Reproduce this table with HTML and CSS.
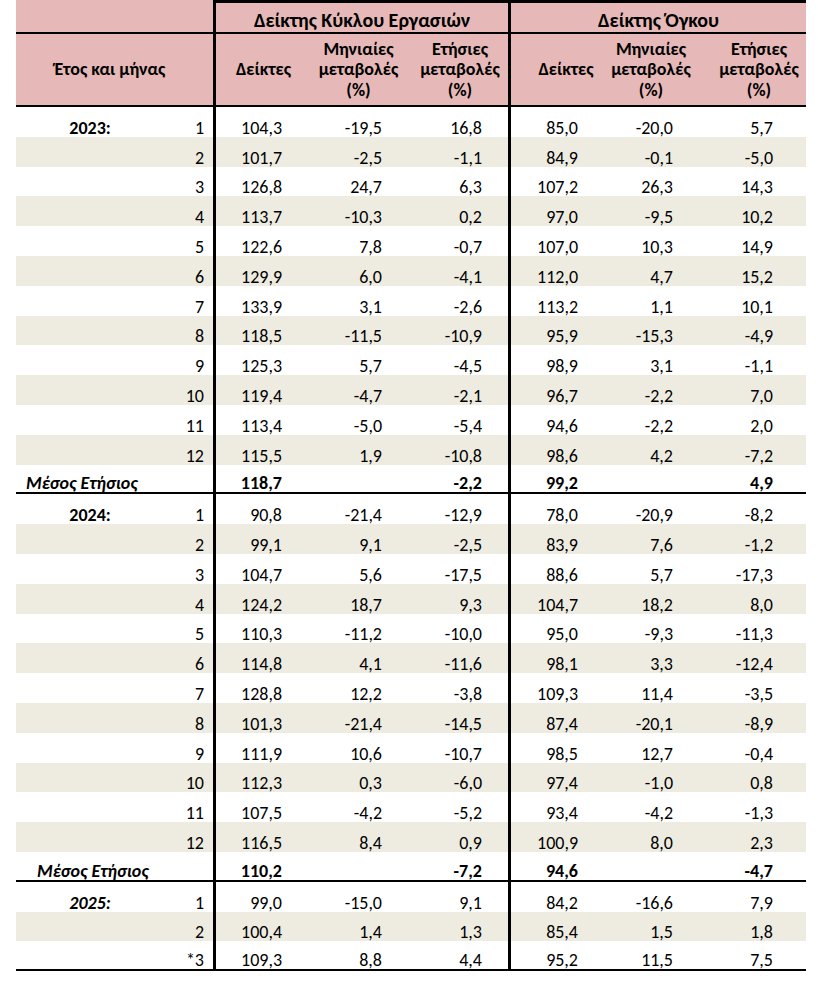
FILE: index.html
```html
<!DOCTYPE html>
<html lang="el">
<head>
<meta charset="utf-8">
<title>Δείκτες Κύκλου Εργασιών και Όγκου</title>
<link rel="stylesheet" href="styles.css">
</head>
<body>
<div class="sheet">
  <div class="row head1">
    <div class="cell corner"></div>
    <div class="cell group">Δείκτης Κύκλου Εργασιών</div>
    <div class="cell group">Δείκτης Όγκου</div>
  </div>
  <div class="row head2">
    <div class="cell hlabel">Έτος και μήνας</div>
    <div class="cell h c1">Δείκτες</div>
    <div class="cell h c2">Μηνιαίες<br>μεταβολές<br>(%)</div>
    <div class="cell h c3">Ετήσιες<br>μεταβολές<br>(%)</div>
    <div class="cell h c4">Δείκτες</div>
    <div class="cell h c5">Μηνιαίες<br>μεταβολές<br>(%)</div>
    <div class="cell h c6">Ετήσιες<br>μεταβολές<br>(%)</div>
  </div>

  <div class="row"><div class="cell year">2023:</div><div class="cell m">1</div><div class="cell n c1">104,3</div><div class="cell n c2">-19,5</div><div class="cell n c3">16,8</div><div class="cell n c4">85,0</div><div class="cell n c5">-20,0</div><div class="cell n c6">5,7</div></div>
  <div class="row alt"><div class="cell year"></div><div class="cell m">2</div><div class="cell n c1">101,7</div><div class="cell n c2">-2,5</div><div class="cell n c3">-1,1</div><div class="cell n c4">84,9</div><div class="cell n c5">-0,1</div><div class="cell n c6">-5,0</div></div>
  <div class="row"><div class="cell year"></div><div class="cell m">3</div><div class="cell n c1">126,8</div><div class="cell n c2">24,7</div><div class="cell n c3">6,3</div><div class="cell n c4">107,2</div><div class="cell n c5">26,3</div><div class="cell n c6">14,3</div></div>
  <div class="row alt"><div class="cell year"></div><div class="cell m">4</div><div class="cell n c1">113,7</div><div class="cell n c2">-10,3</div><div class="cell n c3">0,2</div><div class="cell n c4">97,0</div><div class="cell n c5">-9,5</div><div class="cell n c6">10,2</div></div>
  <div class="row"><div class="cell year"></div><div class="cell m">5</div><div class="cell n c1">122,6</div><div class="cell n c2">7,8</div><div class="cell n c3">-0,7</div><div class="cell n c4">107,0</div><div class="cell n c5">10,3</div><div class="cell n c6">14,9</div></div>
  <div class="row alt"><div class="cell year"></div><div class="cell m">6</div><div class="cell n c1">129,9</div><div class="cell n c2">6,0</div><div class="cell n c3">-4,1</div><div class="cell n c4">112,0</div><div class="cell n c5">4,7</div><div class="cell n c6">15,2</div></div>
  <div class="row"><div class="cell year"></div><div class="cell m">7</div><div class="cell n c1">133,9</div><div class="cell n c2">3,1</div><div class="cell n c3">-2,6</div><div class="cell n c4">113,2</div><div class="cell n c5">1,1</div><div class="cell n c6">10,1</div></div>
  <div class="row alt"><div class="cell year"></div><div class="cell m">8</div><div class="cell n c1">118,5</div><div class="cell n c2">-11,5</div><div class="cell n c3">-10,9</div><div class="cell n c4">95,9</div><div class="cell n c5">-15,3</div><div class="cell n c6">-4,9</div></div>
  <div class="row"><div class="cell year"></div><div class="cell m">9</div><div class="cell n c1">125,3</div><div class="cell n c2">5,7</div><div class="cell n c3">-4,5</div><div class="cell n c4">98,9</div><div class="cell n c5">3,1</div><div class="cell n c6">-1,1</div></div>
  <div class="row alt"><div class="cell year"></div><div class="cell m">10</div><div class="cell n c1">119,4</div><div class="cell n c2">-4,7</div><div class="cell n c3">-2,1</div><div class="cell n c4">96,7</div><div class="cell n c5">-2,2</div><div class="cell n c6">7,0</div></div>
  <div class="row"><div class="cell year"></div><div class="cell m">11</div><div class="cell n c1">113,4</div><div class="cell n c2">-5,0</div><div class="cell n c3">-5,4</div><div class="cell n c4">94,6</div><div class="cell n c5">-2,2</div><div class="cell n c6">2,0</div></div>
  <div class="row alt"><div class="cell year"></div><div class="cell m">12</div><div class="cell n c1">115,5</div><div class="cell n c2">1,9</div><div class="cell n c3">-10,8</div><div class="cell n c4">98,6</div><div class="cell n c5">4,2</div><div class="cell n c6">-7,2</div></div>
  <div class="row mean"><div class="cell meanlabel">Μέσος Ετήσιος</div><div class="cell n c1 b">118,7</div><div class="cell n c2"></div><div class="cell n c3 b">-2,2</div><div class="cell n c4 b">99,2</div><div class="cell n c5"></div><div class="cell n c6 b">4,9</div></div>

  <div class="row"><div class="cell year">2024:</div><div class="cell m">1</div><div class="cell n c1">90,8</div><div class="cell n c2">-21,4</div><div class="cell n c3">-12,9</div><div class="cell n c4">78,0</div><div class="cell n c5">-20,9</div><div class="cell n c6">-8,2</div></div>
  <div class="row alt"><div class="cell year"></div><div class="cell m">2</div><div class="cell n c1">99,1</div><div class="cell n c2">9,1</div><div class="cell n c3">-2,5</div><div class="cell n c4">83,9</div><div class="cell n c5">7,6</div><div class="cell n c6">-1,2</div></div>
  <div class="row"><div class="cell year"></div><div class="cell m">3</div><div class="cell n c1">104,7</div><div class="cell n c2">5,6</div><div class="cell n c3">-17,5</div><div class="cell n c4">88,6</div><div class="cell n c5">5,7</div><div class="cell n c6">-17,3</div></div>
  <div class="row alt"><div class="cell year"></div><div class="cell m">4</div><div class="cell n c1">124,2</div><div class="cell n c2">18,7</div><div class="cell n c3">9,3</div><div class="cell n c4">104,7</div><div class="cell n c5">18,2</div><div class="cell n c6">8,0</div></div>
  <div class="row"><div class="cell year"></div><div class="cell m">5</div><div class="cell n c1">110,3</div><div class="cell n c2">-11,2</div><div class="cell n c3">-10,0</div><div class="cell n c4">95,0</div><div class="cell n c5">-9,3</div><div class="cell n c6">-11,3</div></div>
  <div class="row alt"><div class="cell year"></div><div class="cell m">6</div><div class="cell n c1">114,8</div><div class="cell n c2">4,1</div><div class="cell n c3">-11,6</div><div class="cell n c4">98,1</div><div class="cell n c5">3,3</div><div class="cell n c6">-12,4</div></div>
  <div class="row"><div class="cell year"></div><div class="cell m">7</div><div class="cell n c1">128,8</div><div class="cell n c2">12,2</div><div class="cell n c3">-3,8</div><div class="cell n c4">109,3</div><div class="cell n c5">11,4</div><div class="cell n c6">-3,5</div></div>
  <div class="row alt"><div class="cell year"></div><div class="cell m">8</div><div class="cell n c1">101,3</div><div class="cell n c2">-21,4</div><div class="cell n c3">-14,5</div><div class="cell n c4">87,4</div><div class="cell n c5">-20,1</div><div class="cell n c6">-8,9</div></div>
  <div class="row"><div class="cell year"></div><div class="cell m">9</div><div class="cell n c1">111,9</div><div class="cell n c2">10,6</div><div class="cell n c3">-10,7</div><div class="cell n c4">98,5</div><div class="cell n c5">12,7</div><div class="cell n c6">-0,4</div></div>
  <div class="row alt"><div class="cell year"></div><div class="cell m">10</div><div class="cell n c1">112,3</div><div class="cell n c2">0,3</div><div class="cell n c3">-6,0</div><div class="cell n c4">97,4</div><div class="cell n c5">-1,0</div><div class="cell n c6">0,8</div></div>
  <div class="row"><div class="cell year"></div><div class="cell m">11</div><div class="cell n c1">107,5</div><div class="cell n c2">-4,2</div><div class="cell n c3">-5,2</div><div class="cell n c4">93,4</div><div class="cell n c5">-4,2</div><div class="cell n c6">-1,3</div></div>
  <div class="row alt"><div class="cell year"></div><div class="cell m">12</div><div class="cell n c1">116,5</div><div class="cell n c2">8,4</div><div class="cell n c3">0,9</div><div class="cell n c4">100,9</div><div class="cell n c5">8,0</div><div class="cell n c6">2,3</div></div>
  <div class="row mean"><div class="cell meanlabel shifted">Μέσος Ετήσιος</div><div class="cell n c1 b">110,2</div><div class="cell n c2"></div><div class="cell n c3 b">-7,2</div><div class="cell n c4 b">94,6</div><div class="cell n c5"></div><div class="cell n c6 b">-4,7</div></div>

  <div class="row"><div class="cell year it">2025:</div><div class="cell m">1</div><div class="cell n c1">99,0</div><div class="cell n c2">-15,0</div><div class="cell n c3">9,1</div><div class="cell n c4">84,2</div><div class="cell n c5">-16,6</div><div class="cell n c6">7,9</div></div>
  <div class="row alt"><div class="cell year"></div><div class="cell m">2</div><div class="cell n c1">100,4</div><div class="cell n c2">1,4</div><div class="cell n c3">1,3</div><div class="cell n c4">85,4</div><div class="cell n c5">1,5</div><div class="cell n c6">1,8</div></div>
  <div class="row last"><div class="cell year"></div><div class="cell m">*3</div><div class="cell n c1">109,3</div><div class="cell n c2">8,8</div><div class="cell n c3">4,4</div><div class="cell n c4">95,2</div><div class="cell n c5">11,5</div><div class="cell n c6">7,5</div></div>
</div>
</body>
</html>
```

FILE: styles.css
```css
* {
  box-sizing: border-box;
}

body {
  margin: 0;
  background: #ffffff;
  color: #000000;
  font-family: Carlito, Calibri, Lato, sans-serif;
}

.sheet {
  margin-left: 16px;
  width: 790px;
}

.row {
  display: grid;
  grid-template-columns: 148px 49px 98px 95px 102px 102px 90px 106px;
  height: 29.8px;
}

.row.alt {
  background: #eeece1;
}

.row.mean,
.row.last {
  border-bottom: 2px solid #000;
}

.cell {
  display: flex;
  align-items: flex-end;
  justify-content: flex-end;
  font-size: 18px;
  line-height: 18px;
  font-weight: 500;
  white-space: nowrap;
}

.c1,
.c4 {
  border-left: 3px solid #000;
}

/* header */
.head1 {
  height: 34px;
  background: #e6b8b7;
  border-bottom: 2px solid #000;
}

.head1 .corner {
  grid-column: span 2;
}

.head1 .group {
  grid-column: span 3;
  border-left: 3px solid #000;
  border-top: 3px solid #000;
  justify-content: center;
  font-size: 20px;
  line-height: 20px;
  font-weight: bold;
  padding-bottom: 2px;
}

.head2 {
  height: 73px;
  background: #e6b8b7;
  border-bottom: 2px solid #000;
}

.head2 .cell {
  align-items: center;
  justify-content: center;
  text-align: center;
  font-weight: bold;
  line-height: 20.5px;
}

.head2 .hlabel {
  grid-column: span 2;
  padding-right: 9px;
}

.head2 .c3 { padding-left: 6px; }
.head2 .c4 { padding-left: 11px; }
.head2 .c5 { padding-right: 8px; }
.head2 .c6 { padding-left: 12px; }

/* body cells */
.year {
  justify-content: center;
  font-weight: bold;
}

.cell.year {
  font-weight: bold;
}

.year.it {
  font-style: italic;
}

.m {
  padding-right: 9px;
}

.n.c1 { padding-right: 29px; }
.n.c2 { padding-right: 24px; }
.n.c3 { padding-right: 26px; }
.n.c4 { padding-right: 32px; }
.n.c5 { padding-right: 27px; }
.n.c6 { padding-right: 33px; }

.cell.b {
  font-weight: bold;
}

.cell.meanlabel {
  grid-column: span 2;
  justify-content: flex-start;
  padding-left: 10px;
  font-weight: bold;
  font-style: italic;
}

.cell.meanlabel.shifted {
  padding-left: 21px;
}
```
